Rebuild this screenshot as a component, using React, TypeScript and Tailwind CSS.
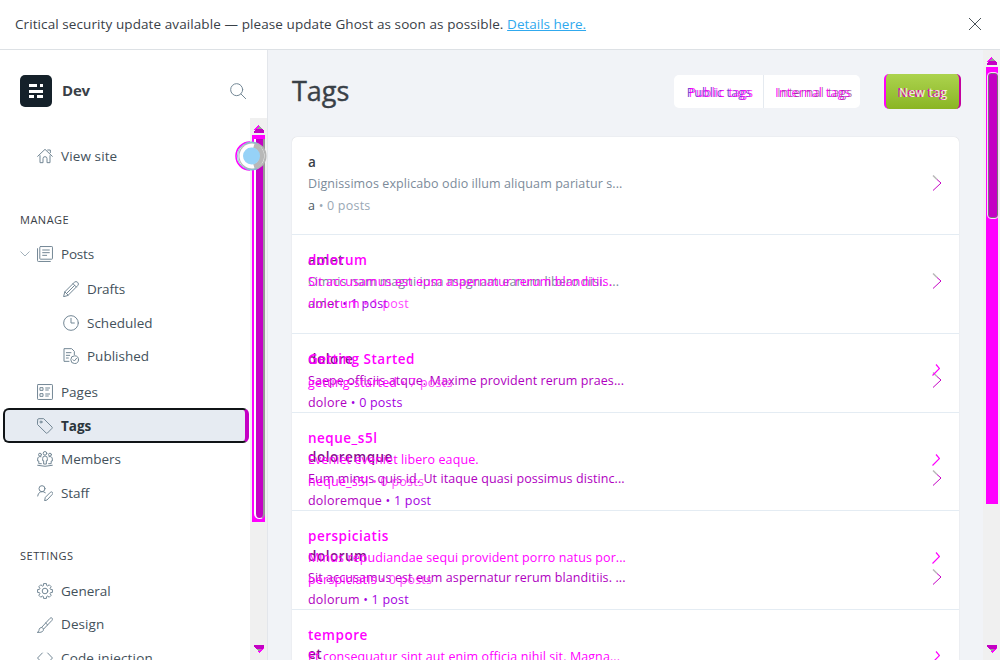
import type { ReactNode } from 'react';

function Icon({ children, className = '' }: { children: ReactNode; className?: string }) {
  return (
    <svg
      viewBox="0 0 24 24"
      className={`h-4 w-4 shrink-0 fill-none stroke-[#738795] ${className}`}
      strokeWidth="1.5"
      strokeLinecap="round"
      strokeLinejoin="round"
    >
      {children}
    </svg>
  );
}

const gearPoints = Array.from({ length: 8 }, (_, tooth) =>
  [
    [-17, 8.6],
    [-11, 11.3],
    [11, 11.3],
    [17, 8.6],
  ].map(([offset, radius]) => {
    const angle = ((tooth * 45 + offset) * Math.PI) / 180;
    return `${(12 + radius * Math.sin(angle)).toFixed(2)},${(12 - radius * Math.cos(angle)).toFixed(2)}`;
  }),
)
  .flat()
  .join(' ');

const icons: Record<string, ReactNode> = {
  house: <path d="M1 12.5 12 2l11 10.5M4.5 11.5V22H9v-6a3 3 0 0 1 6 0v6h4.500V11.500M16 3h4v4" />,
  posts: (
    <>
      <rect x="4.200" y=".8" width="19" height="19" rx="1" />
      <path d="M.8 4v18a1.200 1.200 0 0 0 1.200 1.200h18M8.500 6h10M8.500 10h10M8.500 14h6" />
    </>
  ),
  pencil: <path d="m1 23 1.700-6.800L17 2a3.300 3.300 0 0 1 5 5L7.800 21.300zM2.700 16.200l5.100 5.100M15 4l5 5M5.500 18.500 17.500 6.500" />,
  clock: (
    <>
      <circle cx="12" cy="12" r="11" />
      <path d="M12 5v7h5" />
    </>
  ),
  published: (
    <>
      <path d="M9 20H1.500V1H13l4 4v5M5 7h7M5 11h5M5 15h3" />
      <circle cx="17.500" cy="17.500" r="5.800" />
      <path d="m15 17.500 2 2 3.300-4" />
    </>
  ),
  pages: (
    <>
      <rect x=".8" y=".8" width="22.400" height="22.400" rx="1" />
      <path d="M5 5.500h4v4H5zM5 14.500h4v4H5zM13 6h6M13 9h4M13 15h6M13 18h4" />
    </>
  ),
  tag: (
    <>
      <path d="M1 2.500A1.500 1.500 0 0 1 2.500 1H10l12.500 12.500a1.500 1.500 0 0 1 0 2L15.700 22.500a1.500 1.500 0 0 1-2 0L1 10z" />
      <circle cx="6" cy="6" r="1.500" />
    </>
  ),
  members: (
    <>
      <circle cx="12" cy="3.500" r="2.700" />
      <circle cx="4.500" cy="5.500" r="2.200" />
      <circle cx="19.500" cy="5.500" r="2.200" />
      <path d="M10 19v-4.500H8.500V11a3.500 3.500 0 0 1 7 0v3.500H14V19zM6 8.500C3 7.500 1 9.500 1 12v3h1.700v4H6.500M18 8.500c3-1 5 1 5 3.500v3h-1.700v4h-3.800M1 21.500q11 3 22 0" />
    </>
  ),
  staff: (
    <>
      <circle cx="7.500" cy="5.500" r="4.500" />
      <path d="M1 16.500a7 7 0 0 1 11.500-5M11.500 23l1-4.500 7.500-7.500a2 2 0 0 1 3 3L15.500 22z" />
    </>
  ),
  gear: (
    <>
      <circle cx="12" cy="12" r="4.200" />
      <polygon points={gearPoints} />
    </>
  ),
  brush: <path d="M1 23c3-1 1-4 3.500-6.500 3-2 6 .5 5 3.500C8.500 23 4 23.500 1 23zM7 15.500 19.500 2c2-2 5 0 3 3L10 18M13 9l3 3" />,
  code: <path d="M8 4.500.8 12 8 19.500M16 4.500l7.200 7.500-7.200 7.500" />,
};

function NavItem({ icon, label, className, text = '', stroke = '' }: { icon: string; label: string; className: string; text?: string; stroke?: string }) {
  return (
    <li className={`flex shrink-0 items-center gap-2 text-[13.5px] text-[#43515b] ${className}`}>
      <Icon className={stroke}>{icons[icon]}</Icon>
      <span className={`whitespace-nowrap ${text}`}>{label}</span>
    </li>
  );
}

function Arrow({ down = false }: { down?: boolean }) {
  return (
    <svg viewBox="0 0 10 8" className={`h-2 w-2.5 shrink-0 ${down ? 'rotate-180' : ''}`} shapeRendering="crispEdges">
      <path d="M0 5 4.500 0 6 2 3 5z" fill="#ff00ff" />
      <path d="M3 4 5 1l3 3v1H3z" fill="#999999" />
      <path d="M0 8V6l2-2h6l2 2v2z" fill="#c400c4" />
    </svg>
  );
}

type Tag = { title: string; text?: string; slug: string; count: string; height: string };

const before: Tag[] = [
  { title: 'a', text: 'Dignissimos explicabo odio illum aliquam pariatur s...', slug: 'a', count: '0 posts', height: 'h-[98px]' },
  { title: 'amet', text: 'Omnis nam magni ipsa magnam earum libero nisi. ...', slug: 'amet', count: '1 post', height: 'h-[99px]' },
  { title: 'dolore', text: 'Saepe officiis atque. Maxime provident rerum praes...', slug: 'dolore', count: '0 posts', height: 'h-[98px]' },
  { title: 'doloremque', text: 'Eum minus quis id. Ut itaque quasi possimus distinc...', slug: 'doloremque', count: '1 post', height: 'h-[99px]' },
  { title: 'dolorum', text: 'Sit accusamus est eum aspernatur rerum blanditiis. ...', slug: 'dolorum', count: '1 post', height: 'h-[98px]' },
  { title: 'et', slug: '', count: '', height: 'h-[99px]' },
];

const after: Tag[] = [
  { title: 'dolorum', text: 'Sit accusamus est eum aspernatur rerum blanditiis.', slug: 'dolorum', count: '1 post', height: 'h-[99px]' },
  { title: 'Getting Started', slug: 'getting-started', count: '7 posts', height: 'h-[79px]' },
  { title: 'neque_s5l', text: 'Eveniet eveniet libero eaque.', slug: 'neque_s5l', count: '0 posts', height: 'h-[98px]' },
  { title: 'perspiciatis', text: 'Minus repudiandae sequi provident porro natus por...', slug: 'perspiciatis', count: '0 posts', height: 'h-[99px]' },
  { title: 'tempore', text: 'Et consequatur sint aut enim officia nihil sit. Magna...', slug: 'tempore', count: '0 posts', height: 'h-[98px]' },
];

function BeforeRow({ tag, index }: { tag: Tag; index: number }) {
  const title = index < 2 ? 'text-[#394047]' : 'text-[#850b8c]';
  const body = index < 2 ? 'text-[#7c8b9a]' : 'text-[#b000bf]';
  const slug = index < 2 ? 'text-[#4c5862]' : 'text-[#b000bf]';
  const count = index === 0 ? 'text-[#9aa8b5]' : 'text-[#a400df]';
  return (
    <li className={`flex shrink-0 items-start justify-between pl-4 pr-[17px] pt-3.5 ${tag.height} ${index === 0 ? 'border-b border-[#e4ecf3]' : ''}`}>
      <div className="whitespace-nowrap text-[12.5px] leading-[22px] tracking-[0.09px]">
        <h3 className={`text-[13.5px] font-semibold tracking-[0.5px] ${title}`}>{tag.title}</h3>
        {tag.text && <p className={body}>{tag.text}</p>}
        {tag.slug && (
          <p className={`tracking-[0.22px] ${count}`}>
            <span className={slug}>{tag.slug}</span> • {tag.count}
          </p>
        )}
      </div>
      {tag.slug && (
        <svg viewBox="0 0 10 16" className="mt-6 h-4 w-2.5 fill-none">
          <path d="M1 .5 5 4.500" stroke="#b8b8b8" strokeWidth="1.500" />
          <path d="m5 4.500 4 3.500-8 7.500" stroke="#c400c4" />
        </svg>
      )}
    </li>
  );
}

function AfterRow({ tag, index }: { tag: Tag; index: number }) {
  return (
    <li className={`flex shrink-0 items-start justify-between border-b border-[#e4ecf3] pl-4 pr-[19px] pt-3.5 text-[#ff00ff] ${tag.height}`}>
      <div className="whitespace-nowrap text-[12.5px] leading-[22px] tracking-[0.09px]">
        <h3 className="text-[13.5px] font-semibold tracking-[0.5px]">{tag.title}</h3>
        {tag.text && <p>{tag.text}</p>}
        <p className={`tracking-[0.22px] ${tag.text ? '' : 'mt-0.5'}`}>
          {tag.slug} <span className="opacity-75">• {tag.count}</span>
        </p>
      </div>
      {index > 0 && (
        <svg viewBox="0 0 8 12" className={`h-3 w-2 fill-none stroke-[#ff00ff] ${index === 1 ? 'mt-4' : 'mt-[27px]'}`} strokeWidth="1.200">
          <path d="m4 .5 3.500 4L.5 11.500" />
        </svg>
      )}
    </li>
  );
}

function Doubled({ label, base, over }: { label: string; base: string; over: string }) {
  return (
    <span className="grid whitespace-nowrap">
      <span className={`col-start-1 row-start-1 mr-0.5 ${base}`}>{label}</span>
      <span className={`col-start-1 row-start-1 ml-0.5 ${over}`}>{label}</span>
    </span>
  );
}

export default function App() {
  return (
    <div className="flex h-[660px] w-[1000px] flex-col overflow-hidden bg-white font-['Open_Sans','Noto_Sans',sans-serif] text-[#394047]">
      <header className="flex h-[50px] shrink-0 items-center justify-between border-b border-[#dde1e5] pl-[15px] pr-[19px] text-[13.500px]">
        <p className="whitespace-nowrap tracking-[0.09px]">
          Critical security update available — please update Ghost as soon as possible.{' '}
          <a className="tracking-normal text-[#30a9ee] underline">Details here.</a>
        </p>
        <svg viewBox="0 0 12 12" className="mb-px h-3 w-3 fill-none stroke-[#4a5359]">
          <path d="m0 0 12 12M12 0 0 12" />
        </svg>
      </header>

      <div className="flex min-h-0 flex-1">
        <aside className="relative flex w-[268px] shrink-0 flex-col border-r border-[#e3e6eb]">
          <div className="flex h-[68px] shrink-0 items-center pl-5 pr-[21px] pt-[14px]">
            <svg viewBox="0 0 32 32" className="h-8 w-8">
              <rect width="32" height="32" rx="5" fill="#15212a" />
              <path d="M9 9h8v3H9zM20 9h3v3h-3zM9 15h14v3H9zM9 20h5v3H9zM17 20h6v3h-6z" fill="#fff" />
            </svg>
            <strong className="mb-0.5 ml-2.5 flex-1 text-[15px] font-bold tracking-[-0.2px]">Dev</strong>
            <Icon>
              <circle cx="10" cy="10" r="9" />
              <path d="m16.500 16.500 7 7" />
            </Icon>
          </div>
          <div className="flex min-h-0 flex-1">
            <nav className="flex w-[250px] shrink-0 flex-col overflow-hidden">
              <ul className="mt-[21px]">
                <NavItem icon="house" label="View site" text="tracking-[0.12px]" className="h-[34px] pl-[37px]" />
              </ul>
              <h4 className="mt-[37px] h-5 shrink-0 pl-5 text-[11px] leading-5 tracking-[0.5px]">MANAGE</h4>
              <ul className="mt-[7px] shrink-0">
                <li className="flex h-[34px] items-center pl-5 text-[13.500px] text-[#43515b]">
                  <svg viewBox="0 0 10 6" className="mr-[7px] h-1.5 w-2.5 fill-none stroke-[#a3b1bb]">
                    <path d="m.5.5 4.500 4.500L9.500.5" />
                  </svg>
                  <Icon>{icons.posts}</Icon>
                  <span className="ml-2 tracking-[-0.2px]">Posts</span>
                </li>
                <NavItem icon="pencil" label="Drafts" text="tracking-[-0.1px]" className="h-9 pl-[63px]" />
                <NavItem icon="clock" label="Scheduled" className="h-8 pl-[63px]" />
                <NavItem icon="published" label="Published" className="h-[34px] pl-[63px]" />
                <NavItem icon="pages" label="Pages" className="mt-0.5 h-[34px] pl-[37px]" />
                <NavItem
                  icon="tag"
                  label="Tags"
                  text="pt-0.5 font-bold text-[#2b353c]"
                  stroke="stroke-[#56636d]"
                  className="-mt-px ml-[3px] mr-px h-[35px] rounded-md border-2 border-r-4 border-[#101417] border-r-[#c400c4] bg-[#e6ebf2] pl-8"
                />
                <NavItem icon="members" label="Members" className="-mt-px h-[34px] pl-[37px]" />
                <NavItem icon="staff" label="Staff" text="tracking-[-0.1px]" className="h-[34px] pl-[37px]" />
              </ul>
              <h4 className="mt-9 h-5 shrink-0 pl-5 text-[11px] leading-5 tracking-[0.5px]">SETTINGS</h4>
              <ul className="mt-2 shrink-0">
                <NavItem icon="gear" label="General" className="h-[34px] pl-[37px]" />
                <NavItem icon="brush" label="Design" text="tracking-[0.1px]" className="h-[33px] pl-[37px]" />
                <NavItem icon="code" label="Code injection" text="tracking-[0.15px]" className="h-[34px] pl-[37px]" />
              </ul>
            </nav>
            <div className="flex w-[17px] flex-col items-center bg-[#f0f0f0] pb-[7px] pt-[7px]">
              <Arrow />
              <div className="mt-0.5 h-[387px] w-[13px] shrink-0 bg-[#ff00ff] pb-[3px] pl-0.5 pt-1">
                <div className="h-full w-[11px] rounded-b-md border-x-2 border-b border-l-white border-r-[#999999] border-b-white bg-[#c400c4]" />
              </div>
              <div className="flex-1" />
              <Arrow down />
            </div>
          </div>
          <svg viewBox="0 0 32 32" className="absolute left-[235px] top-[90px] h-8 w-8 fill-none">
            <circle cx="17.500" cy="16" r="12.500" fill="#fff" stroke="#b5b5b5" strokeWidth="3" />
            <path d="M15 2a14 14 0 0 0 0 28" stroke="#ff00ff" strokeWidth="1.500" />
            <circle cx="17" cy="16" r="12.500" fill="#fff" />
            <path d="M19 5.500a11 11 0 0 1 0 21" stroke="#b8b8b8" strokeWidth="5" />
            <path d="M11 3.500a13.500 13.500 0 0 1 11 0M11 28.500a13.500 13.500 0 0 0 11 0" stroke="#8bbcd2" strokeWidth="1.500" />
            <path d="M11 3.500a13.500 13.500 0 0 0 0 25" stroke="#8bbcd2" />
            <circle cx="16.500" cy="16" r="8.500" fill="#96d2f7" />
          </svg>
        </aside>

        <main className="min-w-0 flex-1 bg-[#f1f3f7] pl-6 pr-[22px]">
          <div className="mb-1 flex h-[83px] items-center">
            <h1 className="flex-1 text-[27px] font-medium [-webkit-text-stroke:0.4px_#394047]">Tags</h1>
            <div className="flex h-[33px] items-stretch overflow-hidden rounded-[5px] bg-white text-[12px] tracking-[0.42px]">
              <button className="flex w-[90px] items-center justify-center border-r border-[#e5eaf0] pl-[3px] pt-0.5">
                <Doubled label="Public tags" base="text-[#7b45c8]" over="text-[#ff00ff]/90" />
              </button>
              <button className="flex w-24 items-center justify-center pl-1 pt-0.5">
                <Doubled label="Internal tags" base="text-[#ff00ff]" over="text-[#813388]/70" />
              </button>
            </div>
            <button className="ml-6 flex h-[35px] w-[77px] items-center justify-center rounded-[5px] border-x-2 border-l-[#ff00ff] border-r-[#c400a0] bg-linear-to-b from-[#acd34d] to-[#8ab522] pt-0.5 text-[12px] tracking-[0.4px]">
              <Doubled label="New tag" base="text-[#e000b0]" over="text-white/85" />
            </button>
          </div>
          <div className="grid h-[523px] w-[667px] overflow-hidden rounded-t-[5px] bg-white shadow-[0_0_1px_rgba(0,0,0,0.2)]">
            <ul className="col-start-1 row-start-1 flex flex-col">
              {before.map((tag, i) => (
                <BeforeRow key={tag.title} tag={tag} index={i} />
              ))}
            </ul>
            <ul className="col-start-1 row-start-1 flex flex-col pt-[98px]">
              {after.map((tag, i) => (
                <AfterRow key={tag.title} tag={tag} index={i} />
              ))}
            </ul>
          </div>
        </main>

        <div className="flex w-[17px] shrink-0 flex-col items-center bg-[#f0f0f0] pb-[7px] pt-[7px]">
          <Arrow />
          <div className="mt-0.5 h-[437px] w-3 shrink-0 bg-[#ff00ff] pl-0.5 pt-1.5">
            <div className="h-[145px] w-2.5 rounded-[3px] border border-[#777777] bg-[#c400c4] outline outline-[#ffd5ff]" />
          </div>
          <div className="flex-1" />
          <Arrow down />
        </div>
      </div>
    </div>
  );
}
